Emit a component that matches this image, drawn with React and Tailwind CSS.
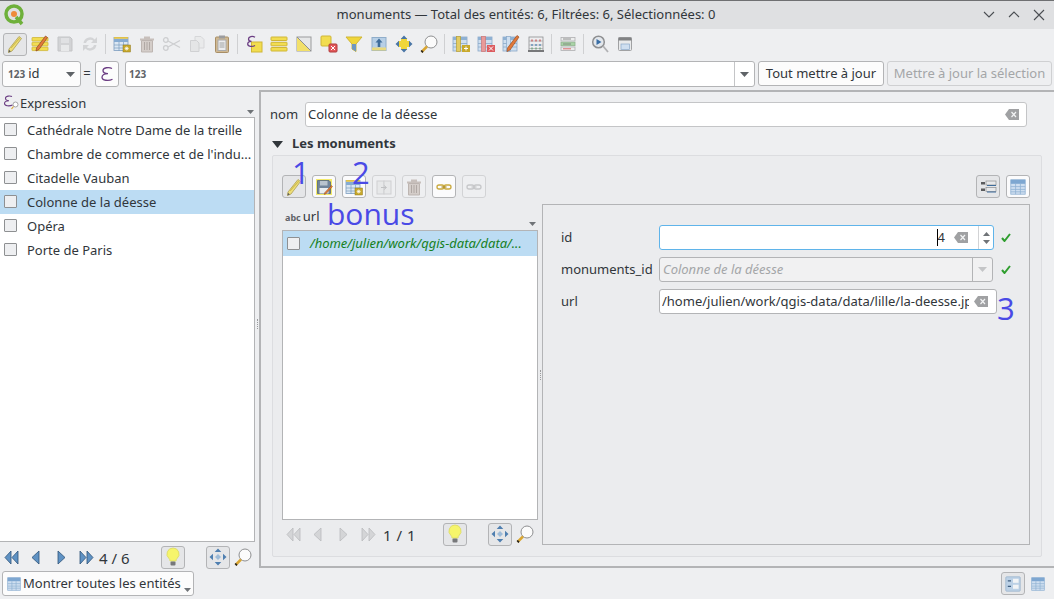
import React from 'react';

const S = ({ children, size = 20, className = '' }) => (
  <svg width={size} height={size} viewBox="0 0 20 20" className={`shrink-0 ${className}`}>{children}</svg>
);

// ---- icons
const Pencil = ({ size = 20 }) => (
  <S size={size}>
    <path d="M14 2.500l2.500 2L7 17l-3.500 1.500.5-3.500z" fill="#efdf78" stroke="#b3a65e" strokeWidth=".9" />
    <path d="M6 14l8.800-10" stroke="#cdbb4c" strokeWidth="1.100" />
    <path d="M4 15.800l-.5 2.700 2.300-1.100z" fill="#5c5c5c" />
  </S>
);
const EditLayer = () => (
  <S>
    <rect x="2" y="3.500" width="16" height="3.500" rx=".5" fill="#f2dd50" stroke="#cfb637" strokeWidth=".8" />
    <rect x="2" y="8.300" width="16" height="3.500" rx=".5" fill="#f2dd50" stroke="#cfb637" strokeWidth=".8" />
    <rect x="2" y="13.100" width="16" height="3.500" rx=".5" fill="#f2dd50" stroke="#cfb637" strokeWidth=".8" />
    <path d="M15.500 2l2 1.500L9 15.500l-3 1.500.6-3.200z" fill="#e2793a" stroke="#8e4a22" strokeWidth=".7" />
  </S>
);
const Save = ({ ghost }) => (
  <S>
    {ghost ? (
      <g opacity=".9">
        <path d="M3 3h12l2 2v12H3z" fill="#cfd0d2" stroke="#c0c1c3" />
        <rect x="6" y="4" width="8" height="5" fill="#dfe0e2" />
        <rect x="6" y="11" width="8" height="6" fill="#e8e9ea" />
      </g>
    ) : (
      <g>
        <rect x="2" y="2" width="16" height="16" fill="#f4ea6a" />
        <path d="M3.500 3.500h11.500l1.500 1.500v11.500h-13z" fill="#71849a" stroke="#56677a" strokeWidth=".8" />
        <rect x="6" y="4" width="7.500" height="4.500" fill="#b9c3cd" />
        <rect x="5.500" y="11" width="9" height="5.500" fill="#e9edf0" />
        <path d="M17.500 8.500l1 1L12 16.800l-1.800.7.500-1.800z" fill="#df7a36" stroke="#8f4d20" strokeWidth=".5" />
      </g>
    )}
  </S>
);
const Refresh = () => (
  <S>
    <path d="M3.500 9a6.500 6.500 0 0 1 11.200-3.600L17 3v6h-6l2.200-2.200A4.500 4.500 0 0 0 6 9z" fill="#d3d4d6" />
    <path d="M16.500 11a6.500 6.500 0 0 1-11.200 3.600L3 17v-6h6l-2.200 2.200A4.500 4.500 0 0 0 14 11z" fill="#d3d4d6" />
  </S>
);
const TableStar = () => (
  <S>
    <rect x="2" y="3.500" width="14" height="13" fill="#dbe7f3" stroke="#7d9dbf" strokeWidth=".8" />
    <rect x="2" y="5" width="14" height="3" fill="#86abd2" />
    <rect x="2" y="3" width="14" height="1.800" fill="#e0c14a" />
    <path d="M2 11h14M2 14h14M7 8v9M11.500 8v9" stroke="#7d9dbf" strokeWidth=".7" />
    <rect x="11" y="11" width="7.500" height="7" fill="#c8a92c" stroke="#8f771c" strokeWidth=".5" />
    <path d="M14.700 12.500v4M12.700 14.500h4M13.300 13l2.800 3M16.100 13l-2.800 3" stroke="#fff" strokeWidth=".7" />
  </S>
);
const Trash = () => (
  <S>
    <path d="M3 4.500h14v2H3zM7 2.500h6v2H7z" fill="#c7bfbb" />
    <path d="M4.500 6.500h11V18h-11z" fill="#d4cdc9" stroke="#bdb5b1" />
    <path d="M7.500 8v8M10 8v8M12.500 8v8" stroke="#b0a8a4" />
  </S>
);
const Scissors = () => (
  <S>
    <circle cx="3.800" cy="6" r="2.300" fill="none" stroke="#cdced0" strokeWidth="1.300" />
    <circle cx="3.800" cy="14" r="2.300" fill="none" stroke="#cdced0" strokeWidth="1.300" />
    <path d="M6 7l12 6.500M6 13L18 6.500" stroke="#cdced0" strokeWidth="1.300" />
  </S>
);
const Copy = () => (
  <S>
    <path d="M8 2.500h6l3 3V14H8z" fill="#e9eaeb" stroke="#d6d7d9" />
    <path d="M3.500 6.500h6l2.500 2.500v8.500H3.500z" fill="#e4e5e6" stroke="#d0d1d3" />
  </S>
);
const Paste = () => (
  <S>
    <rect x="3.500" y="3" width="13" height="15.500" rx="1" fill="#cfb892" stroke="#a88e66" />
    <rect x="6" y="6" width="8" height="10.500" fill="#ecedee" stroke="#a9aaac" />
    <rect x="7" y="1.500" width="6" height="3" fill="#9b9c9e" />
    <path d="M7.500 9h5M7.500 11h5M7.500 13h5" stroke="#8e8f91" strokeWidth=".8" />
  </S>
);
const SelExpr = () => (
  <S>
    <rect x="7.500" y="8" width="10.500" height="10" fill="#f2dd50" stroke="#cfb637" />
    <path d="M11 3.200C8.500 1.800 4.500 2.500 4.500 5c0 1.500 1.300 2.300 3 2.300-2.300 0-3.800 1-3.800 2.700 0 2.500 4.300 3.200 7.300 1.500" fill="none" stroke="#6b3d83" strokeWidth="1.300" />
  </S>
);
const SelAll = () => (
  <S>
    <rect x="2" y="3" width="16" height="3.500" rx=".5" fill="#f2dd50" stroke="#cfb637" />
    <rect x="2" y="8.300" width="16" height="3.500" rx=".5" fill="#f2dd50" stroke="#cfb637" />
    <rect x="2" y="13.500" width="16" height="3.500" rx=".5" fill="#f2dd50" stroke="#cfb637" />
  </S>
);
const Invert = () => (
  <S>
    <rect x="3" y="3" width="14" height="14" fill="#e6e7e8" stroke="#9a9b9d" />
    <path d="M3 3v14h14z" fill="#f2e06a" />
    <path d="M3 3l14 14" stroke="#8e8f91" />
  </S>
);
const Deselect = () => (
  <S>
    <rect x="2" y="2" width="10" height="10" rx="1" fill="#f2dd50" stroke="#cfb637" />
    <rect x="10" y="10" width="8" height="8" rx="1" fill="#e2585a" stroke="#b23a3c" />
    <path d="M12 12l4 4M16 12l-4 4" stroke="#fff" />
  </S>
);
const Funnel = () => (
  <S>
    <path d="M2 3h16l-6 7v7.500L8 15v-5z" fill="#f0d63a" stroke="#cfb637" />
    <path d="M8 10h4v7.500L8 15z" fill="#6f97c0" />
  </S>
);
const MoveTop = () => (
  <S>
    <rect x="3" y="3.500" width="14" height="13" fill="#b7cfe6" stroke="#8fadca" />
    <rect x="3" y="13.500" width="14" height="3" fill="#e9d97f" />
    <path d="M10 4.500l3.500 4H11.300V13H8.700V8.500H6.500z" fill="#3f6d9b" />
  </S>
);
const Pan = ({ blue }) => {
  const c = blue ? '#4f7fb0' : '#4a76a6';
  return (
    <S>
      {!blue && <path d="M7 4h6v3h3v6h-3v3H7v-3H4V7h3z" fill="#f0d63a" />}
      <path d="M10 1.500l3.300 3.500H6.700zM10 18.500l-3.300-3.500h6.600zM1.500 10L5 6.700v6.600zM18.500 10L15 13.300V6.700z" fill={c} />
      {blue && <path d="M10 7l3 3-3 3-3-3z" fill="#9dbbd8" />}
    </S>
  );
};
const Magnifier = () => (
  <S>
    <circle cx="12" cy="8" r="6" fill="#fbfbfb" stroke="#8e8f91" />
    <path d="M8 12.500L2.500 18" stroke="#d9a531" strokeWidth="2.500" />
    <path d="M2.500 18l1.200-1.200" stroke="#222" strokeWidth="2.500" />
  </S>
);
const FieldIcon = ({ kind }) => (
  <S>
    <rect x="2" y="3" width="14" height="14" fill="#cfdff0" stroke="#8aa9c9" strokeWidth=".8" />
    <rect x="2" y="3" width="14" height="3" fill="#8fb1d3" />
    <path d="M2 9.500h14M2 13h14" stroke="#8aa9c9" strokeWidth=".8" />
    <rect
      x="5.500"
      y="2.500"
      width="4"
      height="15"
      fill={kind === 'add' ? '#e3cc63' : kind === 'del' ? '#e89a9a' : '#cfdff0'}
      stroke={kind === 'add' ? '#b79f35' : kind === 'del' ? '#c77' : '#8aa9c9'}
      strokeWidth=".7"
    />
    {kind === 'add' && <rect x="11" y="11" width="8" height="7" fill="#c8a92c" />}
    {kind === 'add' && <path d="M15 12.500v4M13 14.500h4" stroke="#fff" />}
    {kind === 'del' && <rect x="11" y="11" width="8" height="7" fill="#dc5b5f" />}
    {kind === 'del' && <path d="M13 12.500l4 4M17 12.500l-4 4" stroke="#fff" />}
    {kind === 'edit' && <path d="M16 1.500l2 1.500-9 13-3 1.500.5-3.500z" fill="#e2793a" stroke="#9c4f23" strokeWidth=".7" />}
  </S>
);
const Abacus = () => (
  <S>
    <rect x="3" y="3" width="14" height="13.500" fill="#edeef0" stroke="#8e8f91" strokeWidth=".8" />
    <rect x="2" y="16" width="16" height="2" fill="#77787a" />
    <path d="M3 7h14M3 11h14M3 14.500h14" stroke="#a4a5a7" strokeWidth=".7" />
    <path d="M6 5.500v2M10 5.500v2M14 5.500v2" stroke="#c96a6a" strokeWidth="1.500" />
    <path d="M6 10v2M10 10v2M14 10v2" stroke="#6a93bb" strokeWidth="1.500" />
    <path d="M6 13.500v2M10 13.500v2M14 13.500v2" stroke="#7aa982" strokeWidth="1.500" />
  </S>
);
const CondFormat = () => (
  <S>
    <rect x="3" y="3.500" width="14" height="3.500" fill="#eceded" stroke="#aeafb1" strokeWidth=".8" />
    <rect x="3" y="8.200" width="14" height="3.500" fill="#a8d4a6" stroke="#8fb38e" strokeWidth=".8" />
    <rect x="3" y="13" width="14" height="3.500" fill="#eceded" stroke="#aeafb1" strokeWidth=".8" />
    <path d="M5 5h8M5 10h8" stroke="#777" strokeWidth=".8" />
    <path d="M5 14.800h8" stroke="#d3474a" strokeWidth=".8" />
  </S>
);
const Actions = () => (
  <S>
    <circle cx="8.500" cy="8" r="5.800" fill="#e3e7ec" stroke="#8e8f91" strokeWidth="1.500" />
    <path d="M6.500 5l5 3-5 3z" fill="#3a6ea5" />
    <path d="M13 12l5 6" stroke="#b0b1b3" strokeWidth="1.800" />
  </S>
);
const DockTable = () => (
  <S>
    <rect x="3.500" y="3.500" width="13" height="13" rx="1" fill="#e9eaeb" stroke="#a0a1a3" />
    <rect x="3.500" y="3.500" width="13" height="3" fill="#808183" />
    <rect x="6" y="10" width="8.500" height="5.500" fill="#cfdff0" stroke="#8aa9c9" strokeWidth=".7" />
  </S>
);
const TableBlue = ({ size = 20 }) => (
  <S size={size}>
    <rect x="1" y="1" width="18" height="18" fill="#cfdff0" stroke="#8fb1d3" />
    <rect x="1" y="1" width="18" height="5" fill="#7ea7d1" />
    <path d="M1 9.500h18M1 13h18M1 16h18" stroke="#8fb1d3" />
    <path d="M7 6v13M13 6v13" stroke="#8fb1d3" />
  </S>
);
const FormView = () => (
  <S>
    <rect x="3" y="5" width="4" height="2.500" fill="#5a5b5d" />
    <rect x="8" y="4" width="10" height="4" fill="#e8e9ea" stroke="#8e8f91" strokeWidth=".7" />
    <rect x="3" y="11.500" width="4" height="2.500" fill="#5a5b5d" />
    <rect x="8" y="10.500" width="10" height="4" fill="#e8e9ea" stroke="#8e8f91" strokeWidth=".7" />
    <path d="M9 8.500h9M9 15h9" stroke="#3f6d9b" strokeWidth="1.100" />
  </S>
);
const FormBlue = () => (
  <S size={16}>
    <rect x="1" y="1" width="18" height="18" rx="1" fill="#bcd1e6" stroke="#9db5cd" />
    <rect x="10" y="3.500" width="7" height="5" fill="#f2f4f6" />
    <rect x="10" y="11" width="7" height="5" fill="#f2f4f6" />
    <path d="M3.500 6h4M3.500 13h4" stroke="#3f5f80" strokeWidth="1.600" />
  </S>
);
const Bulb = () => (
  <S>
    <path d="M10 1a6 6 0 0 1 4 10.500c-.8.800-1 1.500-1 2.500H7c0-1-.2-1.700-1-2.500A6 6 0 0 1 10 1z" fill="#f6f56b" stroke="#e0df6a" />
    <rect x="7.500" y="14.500" width="5" height="4" rx="1" fill="#77787a" />
  </S>
);
const Link = ({ ghost }) => (
  <S>
    <rect x="3" y="8" width="7" height="4" rx="2" fill="none" stroke={ghost ? '#c6c7c9' : '#c9a93e'} strokeWidth="1.300" />
    <rect x="10" y="8" width="7" height="4" rx="2" fill="none" stroke={ghost ? '#c6c7c9' : '#c9a93e'} strokeWidth="1.300" />
    <path d="M7.500 10h5" stroke={ghost ? '#c6c7c9' : '#a98a2a'} strokeWidth="1.300" />
  </S>
);
const Dup = () => (
  <S>
    <rect x="3" y="4" width="7" height="13" fill="#e7e8e9" stroke="#cfd0d2" />
    <rect x="10" y="4" width="7" height="13" fill="#e7e8e9" stroke="#cfd0d2" />
    <path d="M7 10.500h5M10 8.500l2.500 2-2.500 2" stroke="#c0c1c3" fill="none" />
  </S>
);
const Backspace = () => (
  <svg width="14" height="11" viewBox="0 0 14 11" className="shrink-0">
    <path d="M4 0h10v11H4L0 5.500z" fill="#a0a1a3" />
    <path d="M6.500 3l4.500 5M11 3L6.500 8" stroke="#f2f3f4" strokeWidth="1.200" />
  </svg>
);
const Caret = ({ color = '#5f6367', w = 9, h = 5 }) => (
  <svg width={w} height={h} viewBox="0 0 9 5" preserveAspectRatio="none" className="shrink-0"><path d="M0 0h9L4.500 5z" fill={color} /></svg>
);
const Tiny = () => (
  <svg width="7" height="4" viewBox="0 0 7 4" className="shrink-0"><path d="M0 0h7L3.500 4z" fill="#6f7377" /></svg>
);
const Check = () => (
  <svg width="10" height="9" viewBox="0 0 10 9" className="shrink-0"><path d="M1 5l2.500 3L9 1" fill="none" stroke="#2f9e2f" strokeWidth="2" /></svg>
);
const Checkbox = ({ className = '' }) => <span className={`block h-[13px] w-[13px] shrink-0 rounded-[1px] border border-[#8e9092] bg-[#eeeff1] ${className}`} />;
const Sep = () => <span className="mx-[3px] h-[20px] w-px shrink-0 bg-[#cfd0d2]" />;

const Tool = ({ children }) => <span className="flex h-[24px] w-[25px] shrink-0 items-center justify-center">{children}</span>;

const Boxed = ({ children, tone = 'plain', className = '' }) => (
  <span className={`flex h-[23px] w-[24px] shrink-0 items-center justify-center rounded-[3px] border ${tone === 'on' ? 'border-[#b3b4b6] bg-[#e5e6e8]' : tone === 'ghost' ? 'border-[#d2d3d5] bg-[#eeeff1]' : 'border-[#b3b4b6] bg-[#fbfbfc]'} ${className}`}>
    {children}
  </span>
);

// arrows for the feature navigation
const Nav = ({ kind, off }) => {
  const fill = off ? '#d4d5d7' : '#5f92c4';
  const line = off ? '#b9babc' : '#2d5378';
  const paths = {
    first: ['M7 1L1 7.500 7 14z', 'M14 1L8 7.500 14 14z'],
    prev: ['M10 1L3 7.500 10 14z'],
    next: ['M4 1l7 6.500L4 14z'],
    last: ['M1 1l6 6.500L1 14z', 'M8 1l6 6.500L8 14z'],
  }[kind];
  return (
    <svg width="15" height="15" viewBox="0 0 15 15" className="shrink-0">
      {paths.map((d) => <path key={d} d={d} fill={fill} stroke={line} strokeWidth=".8" />)}
    </svg>
  );
};

const NavBar = ({ label, off }) => (
  <div className="flex h-[26px] items-center">
    <span className="ml-[4px]"><Nav kind="first" off={off} /></span>
    <span className="ml-[10px]"><Nav kind="prev" off={off} /></span>
    <span className="ml-[10px]"><Nav kind="next" off={off} /></span>
    <span className="ml-[10px]"><Nav kind="last" off={off} /></span>
    <span className={`mt-[3px] text-[15px] leading-none ${off ? 'ml-[7px] w-[60px] tracking-[0.5px]' : 'ml-[5px] w-[62px]'}`}>{label}</span>
    <Boxed tone="on"><Bulb /></Boxed>
    <Boxed tone="on" className="ml-[21px]"><Pan blue /></Boxed>
    <span className="ml-[3px]"><Magnifier /></span>
  </div>
);

const names = [
  'Cathédrale Notre Dame de la treille',
  "Chambre de commerce et de l'indu...",
  'Citadelle Vauban',
  'Colonne de la déesse',
  'Opéra',
  'Porte de Paris',
];

export default function App() {
  return (
    <div className="relative flex h-[599px] w-[1054px] flex-col overflow-hidden bg-[#eeeff1] text-[13px] text-[#31363b] font-['Noto_Sans','Open_Sans',sans-serif]">
      {/* Title bar */}
      <header className="relative flex h-[29px] shrink-0 items-center justify-center border-t border-[#6f7072] bg-[#dfe0e2]">
        <span className="absolute left-[2px] top-[2px]">
          <svg width="24" height="24" viewBox="0 0 24 24">
            <circle cx="12" cy="11" r="8" fill="none" stroke="#6eb03a" strokeWidth="3.500" />
            <path d="M14 14l6 7" stroke="#6eb03a" strokeWidth="3.500" />
            <circle cx="12" cy="11" r="3" fill="#ee8a3a" />
          </svg>
        </span>
        <span className="-ml-[2px] text-[13px]">monuments — Total des entités: 6, Filtrées: 6, Sélectionnées: 0</span>
        <span className="absolute right-[8px] top-[8px] flex gap-[11px]">
          <svg width="14" height="12" viewBox="0 0 14 12"><path d="M2 3l5 5 5-5" fill="none" stroke="#4a4e52" strokeWidth="1.100" /></svg>
          <svg width="14" height="12" viewBox="0 0 14 12"><path d="M2 8l5-5 5 5" fill="none" stroke="#4a4e52" strokeWidth="1.100" /></svg>
          <svg width="14" height="12" viewBox="0 0 14 12"><path d="M2 1l10 10M12 1L2 11" fill="none" stroke="#4a4e52" strokeWidth="1.100" /></svg>
        </span>
      </header>

      {/* Main toolbar */}
      <div className="flex h-[32px] shrink-0 items-center pb-[2px] pl-[3px]">
        <span className="flex h-[23px] w-[24px] shrink-0 items-center justify-center rounded-[3px] border border-[#b3b4b6] bg-[#e5e6e8]"><Pencil /></span>
        <Tool><EditLayer /></Tool>
        <Tool><Save ghost /></Tool>
        <Tool><Refresh /></Tool>
        <Sep />
        <Tool><TableStar /></Tool>
        <Tool><Trash /></Tool>
        <Tool><Scissors /></Tool>
        <Tool><Copy /></Tool>
        <Tool><Paste /></Tool>
        <Sep />
        <Tool><SelExpr /></Tool>
        <Tool><SelAll /></Tool>
        <Tool><Invert /></Tool>
        <Tool><Deselect /></Tool>
        <Tool><Funnel /></Tool>
        <Tool><MoveTop /></Tool>
        <Tool><Pan /></Tool>
        <Tool><Magnifier /></Tool>
        <Sep />
        <Tool><FieldIcon kind="add" /></Tool>
        <Tool><FieldIcon kind="del" /></Tool>
        <Tool><FieldIcon kind="edit" /></Tool>
        <Tool><Abacus /></Tool>
        <Sep />
        <Tool><CondFormat /></Tool>
        <Sep />
        <Tool><Actions /></Tool>
        <Tool><DockTable /></Tool>
      </div>

      {/* Field calc bar */}
      <div className="flex h-[29px] shrink-0 items-start pl-[2px]">
        <div className="flex h-[26px] w-[79px] items-center rounded-[3px] border border-[#b3b4b6] bg-[#fcfcfc] pl-[5px] pr-[5px]">
          <span className="text-[10px] font-bold leading-none text-[#5f6367]">123</span>
          <span className="ml-[3px] flex-1">id</span>
          <Caret />
        </div>
        <span className="w-[14px] -translate-x-[1px] pt-[3px] text-center">=</span>
        <div className="flex h-[26px] w-[24px] items-center justify-center rounded-[3px] border border-[#b3b4b6] bg-[#fcfcfc]">
          <svg width="14" height="16" viewBox="0 0 14 16">
            <path d="M12 2.500C9 .8 3 1.500 3 4.500 3 6.500 5 7.600 8 7.600 4.500 7.600 2 8.800 2 11.200c0 3.300 6.500 4.200 10.500 2" fill="none" stroke="#6b3d83" strokeWidth="1.300" />
          </svg>
        </div>
        <div className="ml-[6px] flex h-[26px] w-[630px] items-center rounded-[3px] border border-[#b3b4b6] bg-white">
          <span className="ml-[3px] flex-1 text-[10px] font-bold leading-none text-[#5f6367]">123</span>
          <span className="flex h-full w-[20px] items-center justify-center border-l border-[#c4c5c7]"><Caret /></span>
        </div>
        <button className="ml-[3px] h-[25px] w-[126px] rounded-[3px] border border-[#b3b4b6] bg-[#fcfcfc] pt-[1px] text-center">Tout mettre à jour</button>
        <button className="ml-[3px] h-[25px] w-[165px] rounded-[3px] border border-[#cfd0d2] bg-[#eeeff1] pt-[1px] text-center text-[#a4a6a8]">Mettre à jour la sélection</button>
      </div>

      {/* Body */}
      <div className="flex min-h-0 flex-1">
        {/* Feature list */}
        <aside className="flex w-[255px] shrink-0 flex-col pt-[2px]">
          <div className="relative flex h-[25px] shrink-0 items-center pl-[3px]">
            <span className="mb-[4px] w-[17px] shrink-0">
              <svg width="17" height="19" viewBox="0 0 17 19">
                <path d="M9 3.500C7 2.500 2.500 2.800 2.500 5.300 2.500 6.800 4 7.700 6 7.700 3.500 7.700 1.500 8.600 1.500 10.500c0 2.500 4.800 3 8 1.500" fill="none" stroke="#6b3d83" strokeWidth="1.100" />
                <circle cx="12.500" cy="11.500" r="2.500" fill="#fff" stroke="#8e8f91" strokeWidth=".8" />
                <path d="M10.500 13.500l-2 2.500" stroke="#d9a531" strokeWidth="1.200" />
              </svg>
            </span>
            <span className="-mt-[2px]">Expression</span>
            <span className="absolute bottom-[3px] right-[1px]"><Tiny /></span>
          </div>
          <div className="flex-1 border border-l-0 border-[#b3b4b6] bg-white">
            {names.map((name, i) => (
              <div key={name} className={`flex h-[24px] items-center pl-[4px] ${i === 3 ? 'bg-[#bcdcf3]' : ''}`}>
                <Checkbox className="mb-[2px]" />
                <span className="ml-[10px] mt-[2px] whitespace-nowrap">{name}</span>
              </div>
            ))}
          </div>
          <div className="h-[26px] shrink-0 pt-[2px]">
            <NavBar label="4 / 6" />
          </div>
        </aside>

        {/* Splitter */}
        <div className="flex w-[4px] shrink-0 items-center justify-center">
          <span className="mt-[-10px] h-[10px] w-px border-l border-dotted border-[#9a9b9d]" />
        </div>

        {/* Form frame */}
        <main className="flex w-[795px] shrink-0 flex-col border-2 border-r-0 border-[#b3b4b6] px-[9px] pb-[9px]">
          <div className="mt-[10px] flex h-[25px] shrink-0 items-center">
            <span className="w-[35px]">nom</span>
            <div className="flex h-[25px] w-[722px] items-center justify-between rounded-[3px] border border-[#c4c5c7] bg-white pl-[2px] pr-[7px]">
              <span>Colonne de la déesse</span>
              <Backspace />
            </div>
          </div>

          <div className="mt-[8px] flex h-[18px] shrink-0 items-center pl-[2px]">
            <Caret color="#31363b" w={11} h={7} />
            <span className="ml-[9px] font-bold">Les monuments</span>
          </div>

          {/* Relation group */}
          <section className="relative ml-[2px] mt-[2px] min-h-0 w-[770px] flex-1 rounded-[2px] border border-[#dcdde0] bg-[#ebecee] pl-[9px] pr-[11px] pt-[19px]">
            <div className="flex h-[23px] items-center">
              <Boxed tone="on"><Pencil /></Boxed>
              <Boxed className="ml-[6px]"><Save /></Boxed>
              <Boxed className="ml-[6px]"><TableStar /></Boxed>
              <Boxed tone="ghost" className="ml-[6px]"><Dup /></Boxed>
              <Boxed tone="ghost" className="ml-[6px]"><Trash /></Boxed>
              <Boxed className="ml-[6px]"><Link /></Boxed>
              <Boxed tone="ghost" className="ml-[6px]"><Link ghost /></Boxed>
              <span className="flex-1" />
              <Boxed tone="on"><FormView /></Boxed>
              <Boxed className="ml-[6px]"><TableBlue size={16} /></Boxed>
            </div>

            <div className="mt-[6px] flex h-[342px] items-start">
              <div className="flex h-[342px] w-[256px] shrink-0 flex-col">
                <div className="relative flex h-[26px] shrink-0 items-center pl-[3px]">
                  <span className="text-[9px] font-bold leading-none text-[#5f6367]">abc</span>
                  <span className="ml-[2px]">url</span>
                  <span className="absolute bottom-[4px] right-[2px]"><Tiny /></span>
                </div>
                <div className="flex-1 border border-[#b3b4b6] bg-white">
                  <div className="flex h-[25px] items-center bg-[#bcdcf3] pl-[4px]">
                    <Checkbox className="mb-[1px]" />
                    <span className="ml-[10px] mt-[1px] italic text-[#16801e]">/home/julien/work/qgis-data/data/...</span>
                  </div>
                </div>
                <div className="-mb-[1px] mt-[1px]">
                  <NavBar label="1 / 1" off />
                </div>
              </div>

              <div className="flex h-[341px] w-[4px] shrink-0 items-center justify-center">
                <span className="h-[10px] w-px border-l border-dotted border-[#9a9b9d]" />
              </div>

              {/* Attribute form */}
              <div className="flex h-[341px] w-[488px] shrink-0 flex-col gap-[7px] border border-[#b3b4b6] pl-[18px] pt-[20px]">
                <div className="flex h-[25px] items-center">
                  <span className="w-[98px]">id</span>
                  <div className="flex h-[25px] w-[335px] items-center rounded-[3px] border border-[#5fb4ea] bg-white">
                    <span className="relative ml-auto mr-[9px] leading-none">
                      4
                      <span className="absolute -left-[1px] -top-[2px] h-[17px] w-px bg-black" />
                    </span>
                    <span className="mr-[10px]"><Backspace /></span>
                    <span className="flex h-full w-[15px] flex-col items-center justify-center gap-[4px] border-l border-[#d2d3d5]">
                      <span className="rotate-180"><Caret color="#6f7377" w={7} h={4} /></span>
                      <Caret color="#6f7377" w={7} h={4} />
                    </span>
                  </div>
                  <span className="ml-[7px]"><Check /></span>
                </div>
                <div className="flex h-[25px] items-center">
                  <span className="w-[98px] whitespace-nowrap">monuments_id</span>
                  <div className="flex h-[25px] w-[334px] items-center rounded-[3px] border border-[#b3b4b6] bg-[#f1f1f2]">
                    <span className="ml-[3px] flex-1 italic text-[#a4a6a8]">Colonne de la déesse</span>
                    <span className="flex h-full w-[20px] items-center justify-center border-l border-[#b3b4b6]"><Caret color="#c4c5c7" /></span>
                  </div>
                  <span className="ml-[8px]"><Check /></span>
                </div>
                <div className="flex h-[25px] items-center">
                  <span className="w-[98px]">url</span>
                  <div className="flex h-[25px] w-[338px] items-center rounded-[3px] border border-[#b3b4b6] bg-white pl-[2px] pr-[8px]">
                    <span className="w-[309px] overflow-hidden whitespace-nowrap">/home/julien/work/qgis-data/data/lille/la-deesse.jpg</span>
                    <span className="ml-[5px]"><Backspace /></span>
                  </div>
                </div>
              </div>
            </div>
          </section>
        </main>
      </div>

      {/* Bottom bar */}
      <footer className="flex h-[31px] shrink-0 items-center pl-[2px] pr-[9px]">
        <div className="relative flex h-[25px] w-[192px] items-center rounded-[3px] border border-[#b3b4b6] bg-[#fcfcfc] pl-[4px]">
          <TableBlue size={14} />
          <span className="ml-[2px]">Montrer toutes les entités</span>
          <span className="absolute bottom-[3px] right-[2px]"><Tiny /></span>
        </div>
        <span className="flex-1" />
        <Boxed tone="on" className="w-[23px]"><FormBlue /></Boxed>
        <span className="ml-[6px]"><TableBlue size={14} /></span>
      </footer>

      {/* Blue hand-written annotations over the screenshot */}
      <div className="text-[#4a4ae6] font-['Open_Sans','Noto_Sans',sans-serif]">
        <span className="absolute left-[292px] top-[157px] text-[31px] leading-none">1</span>
        <span className="absolute left-[352px] top-[157px] text-[31px] leading-none">2</span>
        <span className="absolute left-[327px] top-[199px] text-[30px] leading-none">bonus</span>
        <span className="absolute left-[997px] top-[293px] text-[31px] leading-none">3</span>
      </div>
    </div>
  );
}
